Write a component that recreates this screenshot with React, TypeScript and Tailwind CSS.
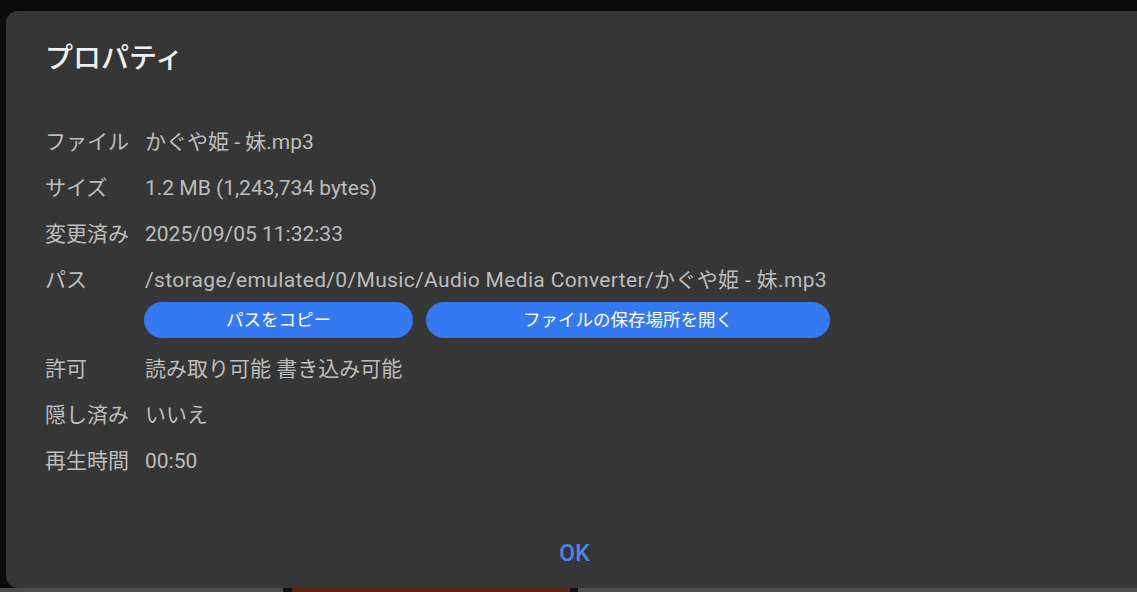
import React from "react"

const font = { fontFamily: 'Roboto, "Noto Sans CJK JP", sans-serif' }

type Row = { label: string; value: string }

const topRows: Row[] = [
  { label: "ファイル", value: "かぐや姫 - 妹.mp3" },
  { label: "サイズ", value: "1.2 MB (1,243,734 bytes)" },
  { label: "変更済み", value: "2025/09/05 11:32:33" },
]

const bottomRows: Row[] = [
  { label: "許可", value: "読み取り可能 書き込み可能" },
  { label: "隠し済み", value: "いいえ" },
  { label: "再生時間", value: "00:50" },
]

function PropRow({ label, value }: Row) {
  return (
    <div className="flex h-[46px] items-center text-[21px] text-[#bdbdbd]">
      <span className="w-[100px] shrink-0 whitespace-nowrap">{label}</span>
      <span className="whitespace-nowrap">{value}</span>
    </div>
  )
}

export default function App() {
  return (
    <div className="flex h-[592px] w-[1137px] flex-col overflow-hidden bg-[#0b0b0b]" style={font}>
      <div className="h-[11px] shrink-0" />
      <div className="ml-[6px] flex h-[577px] shrink-0 flex-col rounded-l-[12px] bg-[#363636] pl-[39px]">
        <h1 className="pt-[31px] text-[28px] font-medium leading-[34px] text-[#efefef]">プロパティ</h1>
        <div className="mt-[44px] flex flex-col">
          {topRows.map((r) => (
            <PropRow key={r.label} {...r} />
          ))}
          <div className="flex h-[46px] items-center text-[21px] text-[#bdbdbd]">
            <span className="w-[100px] shrink-0">パス</span>
            <span className="whitespace-nowrap tracking-[0.35px]">
              /storage/emulated/0/Music/Audio Media Converter/かぐや姫 - 妹.mp3
            </span>
          </div>
          <div className="-mt-[2px] mb-[9px] flex gap-[13px] pl-[99px]">
            <button className="h-[36px] w-[269px] rounded-full bg-[#3579f2] text-[17.5px] text-white">
              パスをコピー
            </button>
            <button className="h-[36px] w-[404px] rounded-full bg-[#3579f2] text-[17.5px] text-white">
              ファイルの保存場所を開く
            </button>
          </div>
          {bottomRows.map((r) => (
            <PropRow key={r.label} {...r} />
          ))}
        </div>
        <div className="mt-auto flex justify-center pb-[17px] pr-[33px]">
          <button className="text-[23px] font-medium text-[#4a86ea]">OK</button>
        </div>
      </div>
      <div className="flex h-[4px] shrink-0">
        <div className="w-[283px] bg-[#4d4d4d]" />
        <div className="w-[9px] bg-[#111]" />
        <div className="w-[278px] bg-[#5a2510]" />
        <div className="w-[8px] bg-[#111]" />
        <div className="flex-1 bg-[#4d4d4d]" />
      </div>
    </div>
  )
}
